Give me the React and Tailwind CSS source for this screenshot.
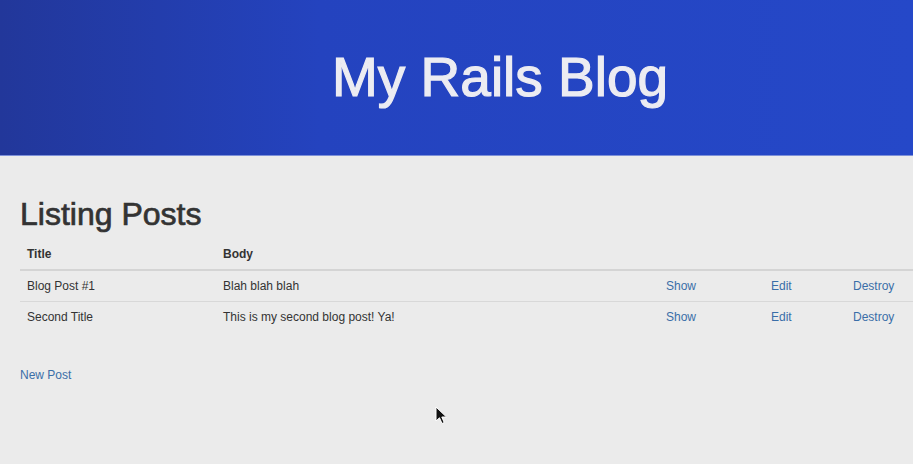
import React from 'react';

const posts = [
  { title: 'Blog Post #1', body: 'Blah blah blah' },
  { title: 'Second Title', body: 'This is my second blog post! Ya!' },
];

export default function App() {
  return (
    <div className="relative min-h-screen bg-[#ebebeb] font-['Liberation_Sans',Arial,sans-serif] overflow-hidden">
      {/* Header */}
      <div className="h-[156px] bg-[linear-gradient(to_right,#22379a_0%,#2443bf_35%,#2548c8_100%)] border-b border-[#7d90d8] pl-[332px] pt-[44px]">
        <h1 className="text-[55px] leading-[66px] text-[#ececf2] [-webkit-text-stroke:1.2px_#ececf2]">My Rails Blog</h1>
      </div>

      {/* Posts */}
      <div className="pl-5 pt-[38px]">
        <h2 className="text-[32px] leading-[40px] text-[#333] [-webkit-text-stroke:0.7px_#333]">Listing Posts</h2>

        <table className="mt-[4px] w-[900px] text-[12px] text-[#333] border-collapse">
          <thead>
            <tr className="h-[32px] border-b-2 border-[#d4d4d4]">
              <th className="w-[196px] text-left font-bold px-[7px]">Title</th>
              <th className="w-[443px] text-left font-bold px-[7px]">Body</th>
              <th className="w-[105px]" />
              <th className="w-[82px]" />
              <th />
            </tr>
          </thead>
          <tbody>
            {posts.map((p, i) => (
              <tr key={i} className="h-[31px] border-b border-[#d8d8d8] last:border-b-0">
                <td className="px-[7px]">{p.title}</td>
                <td className="px-[7px]">{p.body}</td>
                <td className="px-[7px]"><a className="text-[#3a6ea8]">Show</a></td>
                <td className="px-[7px]"><a className="text-[#3a6ea8]">Edit</a></td>
                <td className="px-[7px]"><a className="text-[#3a6ea8]">Destroy</a></td>
              </tr>
            ))}
          </tbody>
        </table>

        <a className="block mt-[34px] text-[12px] text-[#3a6ea8]">New Post</a>
      </div>

      {/* mouse pointer */}
      <svg className="absolute left-[435px] top-[406px]" width="14" height="20" viewBox="0 0 14 20">
        <path d="M1 1 L1 15 L4.5 11.8 L7 17.5 L9.2 16.5 L6.8 11 L11.5 11 Z" fill="#111" stroke="#fff" strokeWidth="1" strokeLinejoin="round" />
      </svg>
    </div>
  );
}
